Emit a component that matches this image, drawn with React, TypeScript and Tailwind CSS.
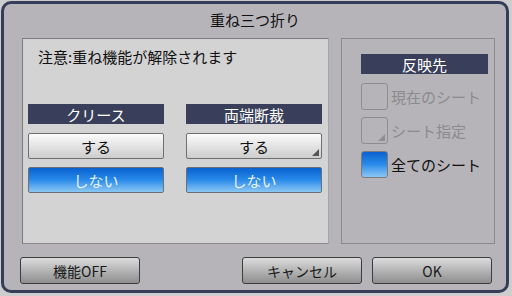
import React from "react";

const font = { fontFamily: '"Noto Sans CJK JP", "Noto Sans", sans-serif' };

function Corner({ color }: { color: string }) {
  return (
    <svg className="absolute right-[2px] bottom-[2px]" width="7" height="7" viewBox="0 0 7 7">
      <polygon points="7,0 7,7 0,7" fill={color} />
    </svg>
  );
}

function Bar({ label, className }: { label: string; className: string }) {
  return (
    <div className={`bg-[#393f5a] text-white text-[15px] leading-none flex items-center justify-center ${className}`}>
      {label}
    </div>
  );
}

function Column({ title, corner }: { title: string; corner?: boolean }) {
  return (
    <div className="w-[136px] flex flex-col">
      <Bar label={title} className="h-[20px]" />
      <button className="relative mt-[9px] h-[26px] rounded-[2px] border border-[#6f6f6f] bg-linear-to-b from-[#fbfbfb] to-[#cdcdcd] text-[15px] text-[#111] leading-none">
        する
        {corner && <Corner color="#555" />}
      </button>
      <button className="mt-[8px] h-[26px] rounded-[2px] border border-[#6a6f78] bg-linear-to-b from-[#0a61cf] via-[#278ae9] to-[#8ac7f3] text-[15px] text-[#e6f2ff] leading-none">
        しない
      </button>
    </div>
  );
}

function Check({ label, state }: { label: string; state: "off" | "corner" | "on" }) {
  return (
    <div className="flex items-center gap-[3px]">
      <div
        className={
          state === "on"
            ? "w-[27px] h-[27px] rounded-[3px] border border-[#7c7c80] bg-linear-to-b from-[#0a61cf] via-[#2a8ce9] to-[#8ac7f3]"
            : "relative w-[27px] h-[27px] rounded-[3px] border border-[#8e8d91] bg-[#b6b4b8]"
        }
      >
        {state === "corner" && <Corner color="#8e8d91" />}
      </div>
      <span className={`text-[15px] leading-none ${state === "on" ? "text-[#111]" : "text-[#8b8a8e]"}`}>{label}</span>
    </div>
  );
}

function FootButton({ label, className = "" }: { label: string; className?: string }) {
  return (
    <button className={`w-[120px] h-[27px] rounded-[3px] border border-[#3d3d3d] bg-linear-to-b from-[#dcdcdc] to-[#8f8f8f] text-[14px] text-[#1a1a1a] leading-none ${className}`}>
      {label}
    </button>
  );
}

export default function App() {
  return (
    <div className="w-[512px] h-[296px] bg-[#cdcdcd] pt-[1px] pl-[1px] pr-[3px] pb-[3px]" style={font}>
      <div className="h-full rounded-[10px] border-[3px] border-[#363d59] bg-[#b6b4b8] flex flex-col">
        <div className="h-[32px] flex items-center justify-center text-[15px] text-[#111]">重ね三つ折り</div>

        <div className="mt-[2px] ml-[18px] flex gap-[12px]">
          <div className="w-[307px] h-[206px] border border-t-[#7d7c80] border-l-[#7d7c80] border-r-[#a5a4a8] border-b-[#8a898d] bg-[#d3d3d3] flex flex-col">
            <div className="pl-[15px] pt-[9px] text-[15px] text-[#111] leading-[18px]">注意:重ね機能が解除されます</div>
            <div className="mt-[38px] pl-[5px] flex gap-[22px]">
              <Column title="クリース" />
              <Column title="両端断裁" corner />
            </div>
          </div>

          <div className="w-[154px] h-[206px] border border-[#8a898d] bg-[#b6b4b8] pl-[19px] pt-[15px] flex flex-col">
            <Bar label="反映先" className="w-[127px] h-[20px]" />
            <div className="mt-[9px] flex flex-col gap-[7px]">
              <Check label="現在のシート" state="off" />
              <Check label="シート指定" state="corner" />
              <Check label="全てのシート" state="on" />
            </div>
          </div>
        </div>

        <div className="mt-[13px] ml-[16px] flex">
          <FootButton label="機能OFF" />
          <FootButton label="キャンセル" className="ml-[102px]" />
          <FootButton label="OK" className="ml-[10px]" />
        </div>
      </div>
    </div>
  );
}
